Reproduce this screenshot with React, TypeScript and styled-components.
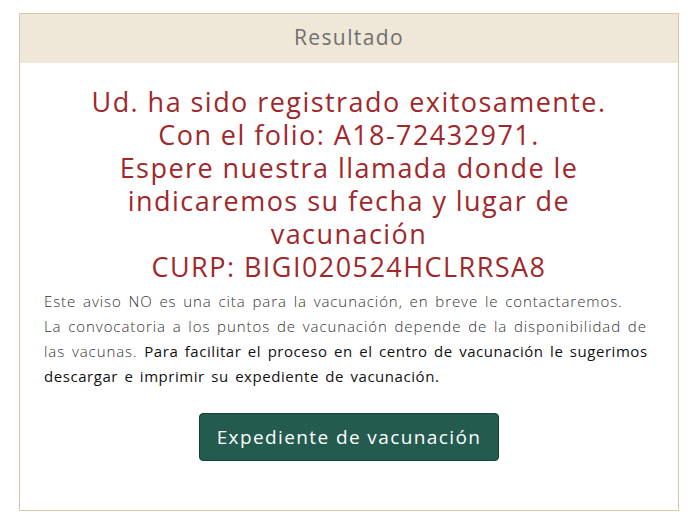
import React from 'react';
import styled, { createGlobalStyle } from 'styled-components';

const palette = {
  Red: '#a0282b',
  Green: '#235b4e',
  GreenDark: '#183f36',
  Beige: '#efe7d8',
  Border: '#d8c9a6',
  Gray: '#6f6f6f',
  Text: '#333333',
};

const GlobalStyle = createGlobalStyle`
  body {
    margin: 0;
    background: #ffffff;
    font-family: 'Open Sans', 'Liberation Sans', sans-serif;
  }
`;

const Page = styled.div`
  padding: 13px 16px 20px 19px;
`;

const Card = styled.section`
  width: 660px;
  box-sizing: border-box;
  border: 1px solid ${palette.Border};
`;

const CardHeader = styled.div`
  height: 49px;
  box-sizing: border-box;
  padding-bottom: 3px;
  background: ${palette.Beige};
  display: flex;
  align-items: center;
  justify-content: center;
  color: ${palette.Gray};
  font-size: 21px;
  letter-spacing: 1.4px;
`;

const CardBody = styled.div`
  padding: 22px 24px 49px 24px;
`;

const Message = styled.h2`
  margin: 0;
  text-align: center;
  color: ${palette.Red};
  font-size: 27px;
  font-weight: 400;
  line-height: 33px;
  letter-spacing: 1.45px;
`;

const Notice = styled.p`
  margin: 6px 0 0;
  color: ${palette.Text};
  font-size: 15px;
  font-weight: 300;
  line-height: 25px;
  letter-spacing: 0.92px;
  word-spacing: 2px;

  & > strong {
    color: #111111;
    font-weight: 400;
    letter-spacing: 0.55px;
  }
`;

const Actions = styled.div`
  display: flex;
  justify-content: center;
  padding-top: 24px;
`;

const Button = styled.button`
  width: 300px;
  height: 48px;
  border: 1px solid ${palette.GreenDark};
  border-radius: 4px;
  background: ${palette.Green};
  color: #ffffff;
  font-family: inherit;
  font-size: 19px;
  font-weight: 500;
  letter-spacing: 1.4px;
  cursor: pointer;
`;

export default function App() {
  return (
    <Page>
      <GlobalStyle />
      <Card>
        <CardHeader>Resultado</CardHeader>
        <CardBody>
          <Message>
            Ud. ha sido registrado exitosamente.
            <br />
            Con el folio: A18-72432971.
            <br />
            Espere nuestra llamada donde le
            <br />
            indicaremos su fecha y lugar de
            <br />
            vacunación
            <br />
            CURP: BIGI020524HCLRRSA8
          </Message>
          <Notice>
            Este aviso NO es una cita para la vacunación, en breve le contactaremos.
            <br />
            La convocatoria a los puntos de vacunación depende de la disponibilidad de
            las vacunas. <strong>Para facilitar el proceso en el centro de vacunación le sugerimos
            descargar e imprimir su expediente de vacunación.</strong>
          </Notice>
          <Actions>
            <Button type="button">Expediente de vacunación</Button>
          </Actions>
        </CardBody>
      </Card>
    </Page>
  );
}
